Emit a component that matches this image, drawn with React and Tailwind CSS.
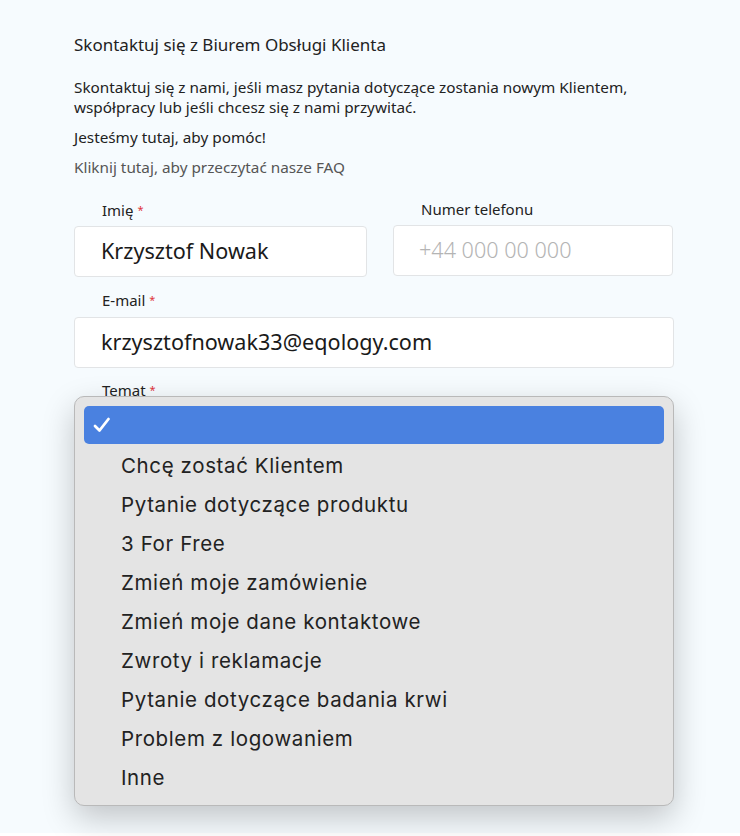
import { useState } from "react";

const topics = [
  "Chcę zostać Klientem",
  "Pytanie dotyczące produktu",
  "3 For Free",
  "Zmień moje zamówienie",
  "Zmień moje dane kontaktowe",
  "Zwroty i reklamacje",
  "Pytanie dotyczące badania krwi",
  "Problem z logowaniem",
  "Inne",
];

function Label({ children, required }) {
  return (
    <label className="block h-5 pl-[28px] text-[15px] leading-5 text-[#222]">
      {children}
      {required && <span className="ml-1 text-[11px] align-top text-[#e0353b]">*</span>}
    </label>
  );
}

function App() {
  const [open] = useState(true);

  return (
    <div className="bg-white min-h-[836px]" style={{ fontFamily: "'Noto Sans', Lato, sans-serif" }}>
      <div className="relative h-[833px] bg-[#f6fbfe] pl-[74px] pt-[33px]">
        <div className="w-[600px]">
          <h2 className="text-[17px] leading-6 text-[#222]">
            Skontaktuj się z Biurem Obsługi Klienta
          </h2>
          <p className="mt-[20px] text-[15.3px] leading-5 text-[#222]">
            Skontaktuj się z nami, jeśli masz pytania dotyczące zostania nowym Klientem,
            <br />
            współpracy lub jeśli chcesz się z nami przywitać.
          </p>
          <p className="mt-[10px] text-[15.3px] leading-5 text-[#222]">Jesteśmy tutaj, aby pomóc!</p>
          <p className="mt-[10px] text-[15.3px] leading-5 text-[#555]">
            Kliknij tutaj, aby przeczytać nasze FAQ
          </p>

          <div className="mt-[23px] grid grid-cols-[293px_280px] gap-x-[26px]">
            <div>
              <Label required>Imię</Label>
              <div className="mt-[6px] flex h-[51px] items-center rounded border border-[#e2e4e6] bg-white pl-[26px] text-[21.6px] text-[#1a1a1a]">
                Krzysztof Nowak
              </div>
            </div>
            <div className="-mt-px">
              <Label>Numer telefonu</Label>
              <div className="mt-[6px] flex h-[51px] items-center rounded border border-[#e2e4e6] bg-white pl-[25px] text-[21.6px] font-light text-[#b4b4b4]">
                +44 000 00 000
              </div>
            </div>
          </div>

          <div className="mt-[13px]">
            <Label required>E-mail</Label>
            <div className="mt-[7px] flex h-[51px] items-center rounded border border-[#e2e4e6] bg-white pl-[26px] text-[21.6px] text-[#1a1a1a]">
              krzysztofnowak33@eqology.com
            </div>
          </div>

          <div className="mt-[12px]">
            <Label required>Temat</Label>
          </div>
        </div>

        {open && (
          <div
            className="absolute left-[74px] top-[396px] w-[600px] h-[410px] rounded-[10px] border border-[#b9b9b9] bg-[#e4e4e4] px-[9px] pt-[9px] shadow-[0_12px_32px_rgba(0,0,0,0.22)]"
            style={{ fontFamily: "Inter, Roboto, sans-serif" }}
          >
            <div className="flex h-[38px] items-center rounded-[5px] bg-[#4a81e0] pl-[9px]">
              <svg width="18" height="16" viewBox="0 0 18 16" fill="none">
                <path d="M2 9 L6.5 13.5 L15.5 2" stroke="white" strokeWidth="2.8" strokeLinecap="round" strokeLinejoin="round" />
              </svg>
            </div>
            <ul className="mt-[3px]">
              {topics.map((t) => (
                <li key={t} className="flex h-[39px] items-center pl-[37px] text-[20.5px] tracking-[0.03em] text-[#222]">
                  {t}
                </li>
              ))}
            </ul>
          </div>
        )}
      </div>
    </div>
  );
}

export default App;
